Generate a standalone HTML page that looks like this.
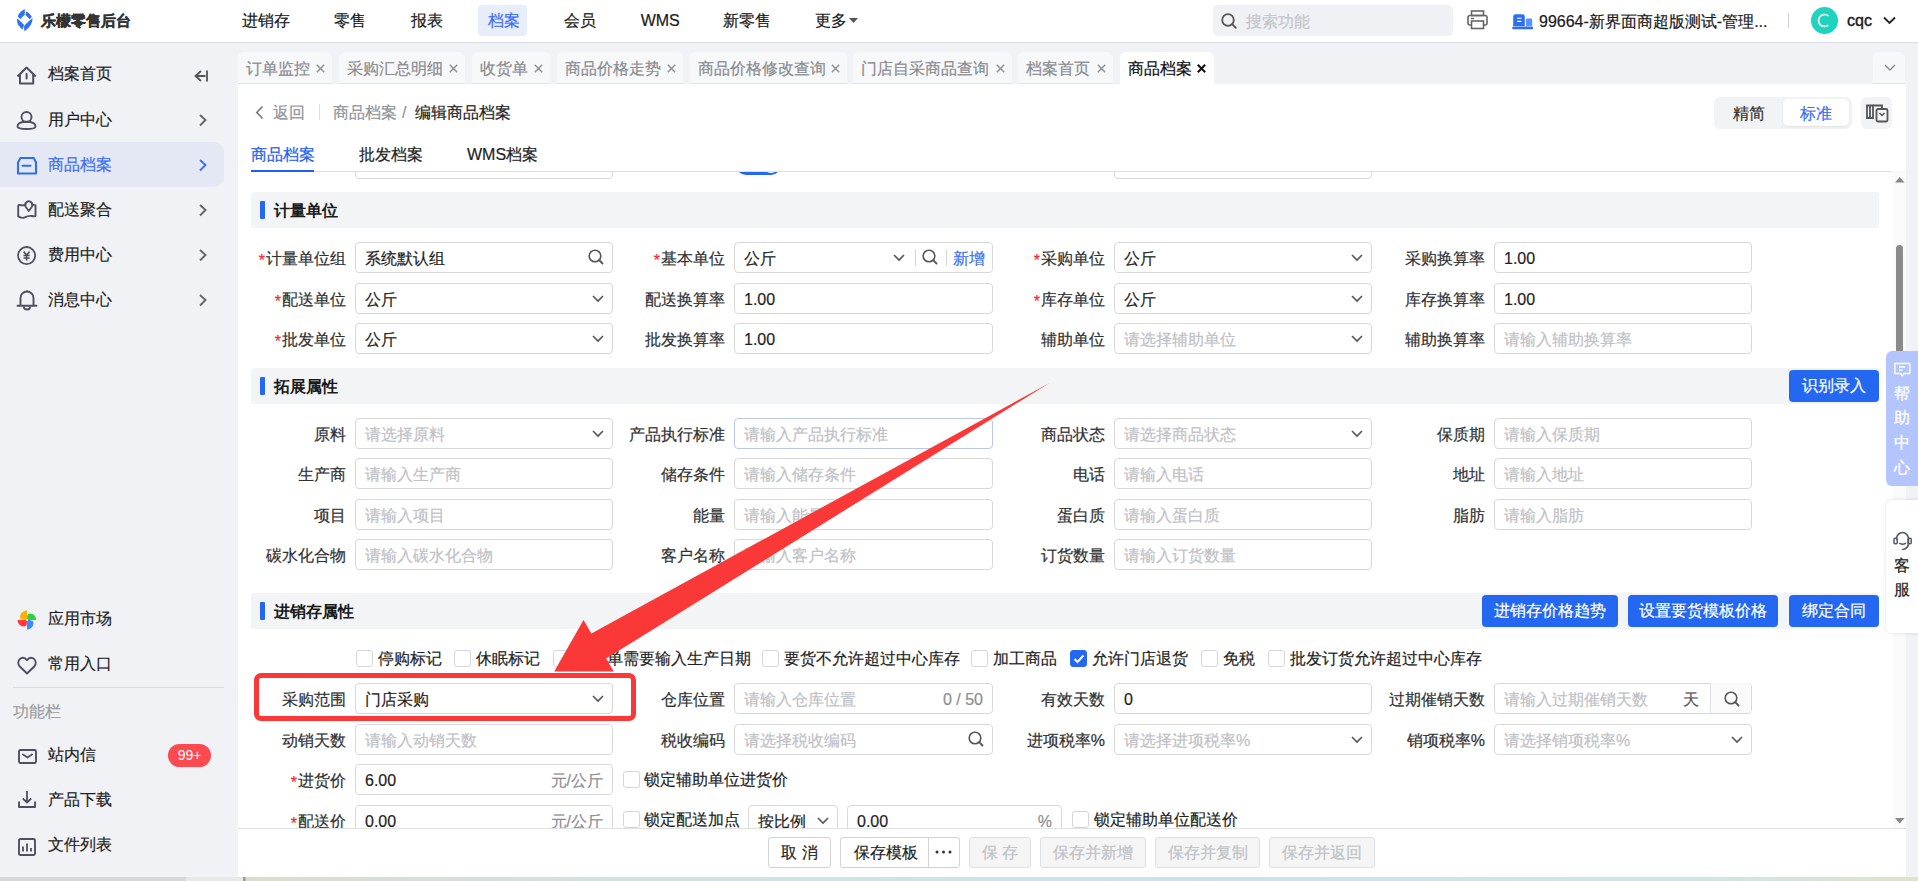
<!DOCTYPE html><html><head><meta charset="utf-8"><title>商品档案</title><style>
*{box-sizing:border-box;margin:0;padding:0}
html,body{-webkit-text-stroke:0.2px currentColor;width:1918px;height:881px;overflow:hidden;background:#f1f2f5;font-family:"Liberation Sans",sans-serif;font-size:16px;color:#1f1f1f}
.abs{position:absolute}
.t{position:absolute;white-space:nowrap;line-height:22px}
#hdr{position:absolute;left:0;top:0;width:1918px;height:43px;background:#fff;border-bottom:1px solid #dcdde2}
#side{position:absolute;left:0;top:43px;width:238px;height:834px;background:#f1f2f5}
#panel{position:absolute;left:238px;top:84px;width:1668px;height:793px;background:#fff}
.tab{position:absolute;top:52px;height:32px;background:#f7f8fa;border-radius:6px 6px 0 0;border-bottom:1px solid #e3e4e8;color:#8a8c91}
.tab span{position:absolute;top:6px;white-space:nowrap;line-height:22px}
.lbl{position:absolute;white-space:nowrap;text-align:right;line-height:22px;color:#303133}
.req{color:#f5222d;margin-right:1px;position:relative;top:2px}
.inp{position:absolute;height:31px;width:258px;border:1px solid #d9d9d9;border-radius:4px;background:#fff}
.inp .v{position:absolute;left:9px;top:5px;line-height:22px;white-space:nowrap;color:#1f1f1f}
.inp .p{position:absolute;left:9px;top:5px;line-height:22px;white-space:nowrap;color:#bfc1c6}
.sec{position:absolute;left:251px;width:1628px;height:36px;background:#f3f4f6;border-radius:3px}
.sec .bar{position:absolute;left:9px;top:9px;width:5px;height:18px;background:#2468f2;border-radius:1px}
.sec .ti{position:absolute;left:23px;top:8px;font-weight:bold;-webkit-text-stroke:0;line-height:22px;color:#1a1a1a}
.btn{position:absolute;height:32px;background:#2468f2;color:#fff;border-radius:4px;text-align:center;line-height:32px;white-space:nowrap}
.cb{position:absolute;width:17px;height:17px;border:1px solid #d4d6db;border-radius:3px;background:#fff}
.fbtn{position:absolute;top:837px;height:31px;border:1px solid #d0d2d6;border-radius:3px;background:#fff;text-align:center;line-height:29px;white-space:nowrap;color:#1f1f1f}
.fbtn.dis{background:#f5f5f5;border-color:#dedfe2;color:#c0c2c6}
svg{position:absolute;overflow:visible}
</style></head><body>
<div id="hdr">
<svg style="left:10px;top:5px" width="30" height="30" viewBox="0 0 30 30"><g fill="#2c72f3"><path d="M14.6 4.1 C11 6.5 8.5 8.5 7.8 11.6 L10.2 14.3 L14.6 9.8 C14.9 8 15 6 14.6 4.1 Z"/><path d="M16.2 6.3 C16 7.8 15.8 9 15.5 10 L19.7 14.3 L21.9 11.8 C20.5 9.5 18.5 7.8 16.2 6.3 Z"/><path d="M7 13.6 C6.5 18 9 22 12.6 24.5 C13.2 22.5 13.8 21 14 19.7 L9.6 15.6 Z"/><path d="M14.6 26.2 C18.5 23.5 22.5 19 22.6 13.3 L20.1 15 L14.3 20.4 C14 22.5 14 24.5 14.6 26.2 Z"/></g></svg>
<div class="t" style="left:41px;top:10px;font-weight:bold;color:#333;font-size:15px;-webkit-text-stroke:0.3px #333">乐檬零售后台</div>
<div class="abs" style="left:478px;top:5px;width:49px;height:31px;background:#e8edfc;border-radius:4px"></div>
<div class="t" style="left:241.7px;top:10px;color:#1a1a1a">进销存</div>
<div class="t" style="left:334px;top:10px;color:#1a1a1a">零售</div>
<div class="t" style="left:411px;top:10px;color:#1a1a1a">报表</div>
<div class="t" style="left:487.5px;top:10px;color:#3d6ff0">档案</div>
<div class="t" style="left:564.3px;top:10px;color:#1a1a1a">会员</div>
<div class="t" style="left:640.7px;top:10px;color:#1a1a1a">WMS</div>
<div class="t" style="left:722.6px;top:10px;color:#1a1a1a">新零售</div>
<div class="t" style="left:814.8px;top:10px;color:#1a1a1a">更多</div>
<svg style="left:849px;top:18px" width="9" height="5"><path d="M0 0 L9 0 L4.5 5Z" fill="#555"/></svg>
<div class="abs" style="left:1213px;top:5px;width:240px;height:31px;background:#f0f1f4;border-radius:5px"></div>
<svg style="left:1221px;top:13px" width="16" height="16"><circle cx="7" cy="7" r="5.8" fill="none" stroke="#555" stroke-width="1.8"/><path d="M11.2 11.2 L14.8 14.8" stroke="#555" stroke-width="1.8" stroke-linecap="round"/></svg>
<div class="t" style="left:1246px;top:11px;color:#c3c5ca">搜索功能</div>
<svg style="left:1467px;top:10px" width="21" height="20"><rect x="4.5" y="1" width="12" height="4.5" fill="none" stroke="#666" stroke-width="1.6"/><rect x="1" y="5.5" width="19" height="9.5" rx="2" fill="none" stroke="#666" stroke-width="1.6"/><rect x="4.5" y="11" width="12" height="7.5" fill="#fff" stroke="#666" stroke-width="1.6"/><path d="M4 8.5 H7" stroke="#666" stroke-width="1.4"/></svg>
<svg style="left:1512px;top:14px" width="22" height="17"><path d="M1.2 12 V2.5 A2.3 2.3 0 0 1 3.5 0.2 H10.5 A2.3 2.3 0 0 1 12.8 2.5 V12 Z" fill="#2c6ff5"/><path d="M14 12 V5.5 A1 1 0 0 1 15 4.5 H19 A1.2 1.2 0 0 1 20.2 5.7 V12 Z" fill="#5d93f8"/><path d="M5 4.3 H9.5 M5 7.4 H9.5" stroke="#fff" stroke-width="1.1"/><rect x="0.2" y="12.6" width="21" height="2.6" rx="1.3" fill="#2c6ff5"/></svg>
<div class="t" style="left:1539px;top:11px;color:#1a1a1a">99664-新界面商超版测试-管理...</div>
<div class="abs" style="left:1788px;top:13px;width:1px;height:15px;background:#cfd0d4"></div>
<div class="abs" style="left:1811px;top:7px;width:27px;height:27px;border-radius:50%;background:#1fd3bf"></div>
<svg style="left:1816px;top:12px" width="17" height="17"><path d="M12.5 4 A6 6 0 1 0 12.5 13" fill="none" stroke="#fff" stroke-width="1.6"/></svg>
<div class="t" style="left:1847px;top:10px;color:#1a1a1a;-webkit-text-stroke:0.4px #1a1a1a">cqc</div>
<svg style="left:1883px;top:16px" width="13" height="9"><path d="M1 1.5 L6.5 7 L12 1.5" fill="none" stroke="#222" stroke-width="1.8"/></svg>
</div>
<div id="side"></div>
<div class="abs" style="left:0;top:142px;width:224px;height:45px;background:#e4e8f5;border-radius:0 10px 10px 0"></div>
<div class="t" style="left:48px;top:63px;color:#1f1f1f">档案首页</div>
<div class="t" style="left:48px;top:108.5px;color:#1f1f1f">用户中心</div>
<svg style="left:199px;top:113.5px" width="9" height="13"><path d="M1 1 L6.5 6 L1 11.5" fill="none" stroke="#666" stroke-width="1.9"/></svg>
<div class="t" style="left:48px;top:153.5px;color:#3d6ff0">商品档案</div>
<svg style="left:199px;top:158.5px" width="9" height="13"><path d="M1 1 L6.5 6 L1 11.5" fill="none" stroke="#3d6ff0" stroke-width="1.9"/></svg>
<div class="t" style="left:48px;top:199px;color:#1f1f1f">配送聚合</div>
<svg style="left:199px;top:204px" width="9" height="13"><path d="M1 1 L6.5 6 L1 11.5" fill="none" stroke="#666" stroke-width="1.9"/></svg>
<div class="t" style="left:48px;top:244px;color:#1f1f1f">费用中心</div>
<svg style="left:199px;top:249px" width="9" height="13"><path d="M1 1 L6.5 6 L1 11.5" fill="none" stroke="#666" stroke-width="1.9"/></svg>
<div class="t" style="left:48px;top:289px;color:#1f1f1f">消息中心</div>
<svg style="left:199px;top:294px" width="9" height="13"><path d="M1 1 L6.5 6 L1 11.5" fill="none" stroke="#666" stroke-width="1.9"/></svg>
<div class="abs" style="left:0;top:600px;width:238px;height:0"></div>
<div class="t" style="left:48px;top:608px;color:#1f1f1f">应用市场</div>
<div class="t" style="left:48px;top:653px;color:#1f1f1f">常用入口</div>
<div class="t" style="left:48px;top:744px;color:#1f1f1f">站内信</div>
<div class="t" style="left:48px;top:789px;color:#1f1f1f">产品下载</div>
<div class="t" style="left:48px;top:834px;color:#1f1f1f">文件列表</div>
<svg style="left:16px;top:66px" width="22" height="20"><path d="M1.5 10.5 L10.6 1.5 L19.7 10.5" fill="none" stroke="#4e5060" stroke-width="2" stroke-linejoin="round"/><path d="M4 8 V17.5 H17.2 V8" fill="none" stroke="#4e5060" stroke-width="2" stroke-linejoin="round"/><path d="M10.6 8 V12.5" stroke="#4e5060" stroke-width="2" stroke-linecap="round"/></svg>
<svg style="left:16px;top:111px" width="21" height="20"><circle cx="10.5" cy="6" r="5" fill="none" stroke="#4e5060" stroke-width="1.9"/><path d="M1.5 15.5 C1.5 12.5 5 10.8 10.5 10.8 C16 10.8 19.5 12.5 19.5 15.5 C19.5 17.2 16 18 10.5 18 C5 18 1.5 17.2 1.5 15.5 Z" fill="none" stroke="#4e5060" stroke-width="1.9"/></svg>
<svg style="left:17px;top:157px" width="20" height="18"><path d="M3.5 1 H16.8 L19 5.5 V16.5 H1 V5.5 Z" fill="none" stroke="#2f6ef2" stroke-width="2.1" stroke-linejoin="round"/><path d="M5.5 8.8 H13.5" stroke="#2f6ef2" stroke-width="2.1" stroke-linecap="round"/></svg>
<svg style="left:17px;top:201px" width="21" height="19"><path d="M8.6 3.6 C7 4.4 5 4.6 3 4 C2 3.7 1.2 4.2 1.2 5.2 V15.3 C3 16.2 5 17.4 6.5 16.8 C9 15.8 11.5 14.3 15 15 C17 15.5 18.5 15.5 18.5 14.5 V4.5 C18.5 3.8 17.5 3.6 15 3.6" fill="none" stroke="#4e5060" stroke-width="1.9" stroke-linejoin="round" stroke-linecap="round"/><path d="M11.8 10 L8.8 6 A3.6 3.6 0 1 1 14.8 6 Z" fill="none" stroke="#4e5060" stroke-width="1.8" stroke-linejoin="round"/></svg>
<svg style="left:17px;top:246px" width="20" height="20"><circle cx="9.6" cy="9.6" r="8.6" fill="none" stroke="#4e5060" stroke-width="1.8"/><path d="M6.6 5.6 L9.6 9 L12.6 5.6 M6.5 9.5 H12.7 M6.5 12 H12.7 M9.6 9 V14.5" fill="none" stroke="#4e5060" stroke-width="1.6"/></svg>
<svg style="left:17px;top:290px" width="20" height="21"><path d="M3.5 15.5 V8 A6.5 6.5 0 0 1 16.5 8 V15.5" fill="none" stroke="#4e5060" stroke-width="1.9"/><path d="M0.5 15.8 H19.5" stroke="#4e5060" stroke-width="1.9" stroke-linecap="round"/><path d="M10 0.5 V1.8" stroke="#4e5060" stroke-width="1.8"/><path d="M6.8 16.5 A3.2 3 0 0 0 13.2 16.5" fill="none" stroke="#4e5060" stroke-width="1.8"/></svg>
<svg style="left:17px;top:609.5px" width="20" height="20"><path d="M10 10 C7 10 3 10 3 7 C3 3 7 0.5 10 0.5 Z" fill="#ffb000"/><path d="M10 10 C10 7 10 3.5 13 3.5 C17 3.5 19.2 7 19.2 10 Z" fill="#2fd141"/><path d="M10 10 C10 13 10 16.5 7 16.5 C3 16.5 0.5 13 0.5 10 Z" fill="#ff3a3a"/><path d="M10 10 C13 10 16.5 10 16.5 13 C16.5 17 13 19.5 10 19.5 Z" fill="#3a8dff"/><circle cx="10" cy="10" r="1" fill="#fff"/></svg>
<svg style="left:16.5px;top:656px" width="20" height="19"><path d="M10 17.5 L2.8 10.5 C0.5 8.2 0.8 4.2 3.5 2.5 C6 1 8.5 2 10 4.2 C11.5 2 14 1 16.5 2.5 C19.2 4.2 19.5 8.2 17.2 10.5 Z" fill="none" stroke="#4e5060" stroke-width="1.9" stroke-linejoin="round"/></svg>
<svg style="left:17.5px;top:749px" width="19" height="15"><rect x="1" y="1" width="17" height="13" rx="1.5" fill="none" stroke="#4e5060" stroke-width="1.9"/><path d="M5 5.5 L9.5 8.5 L14 5.5" fill="none" stroke="#4e5060" stroke-width="1.8" stroke-linecap="round"/></svg>
<svg style="left:17.5px;top:790px" width="18" height="19"><path d="M1 11.5 V17 H17 V11.5" fill="none" stroke="#4e5060" stroke-width="1.9" stroke-linejoin="round"/><path d="M9 1 V12.5 M4.8 8.5 L9 12.5 L13.2 8.5" fill="none" stroke="#4e5060" stroke-width="1.8"/></svg>
<svg style="left:17.5px;top:837.5px" width="18" height="18"><rect x="1" y="1" width="16" height="16" rx="1.5" fill="none" stroke="#4e5060" stroke-width="1.9"/><path d="M5 8.5 V13.5 M9 5.5 V13.5 M13 10 V13.5" stroke="#4e5060" stroke-width="1.8"/></svg>
<svg style="left:194px;top:69.5px" width="15" height="13"><path d="M7 1 L1.5 6 L7 11 M1.5 6 H11.5 M13 0.5 V11.5" fill="none" stroke="#555" stroke-width="1.8"/></svg>
<div class="abs" style="left:13px;top:687px;width:211px;height:1px;background:#d9dadf"></div>
<div class="t" style="left:13px;top:701px;color:#9a9ca1">功能栏</div>
<div class="abs" style="left:168px;top:744px;width:43px;height:23px;background:#fc4a50;border-radius:12px;color:#fff;font-size:14px;-webkit-text-stroke:0;line-height:23px;text-align:center">99+</div>
<div class="tab" style="left:238px;width:94px"><span style="left:8px">订单监控</span><svg style="right:7px;top:12px" width="9" height="9"><path d="M0.8 0.8 L8.2 8.2 M8.2 0.8 L0.8 8.2" stroke="#8f9196" stroke-width="1.5"/></svg></div>
<div class="tab" style="left:339px;width:126px"><span style="left:8px">采购汇总明细</span><svg style="right:7px;top:12px" width="9" height="9"><path d="M0.8 0.8 L8.2 8.2 M8.2 0.8 L0.8 8.2" stroke="#8f9196" stroke-width="1.5"/></svg></div>
<div class="tab" style="left:472px;width:78px"><span style="left:8px">收货单</span><svg style="right:7px;top:12px" width="9" height="9"><path d="M0.8 0.8 L8.2 8.2 M8.2 0.8 L0.8 8.2" stroke="#8f9196" stroke-width="1.5"/></svg></div>
<div class="tab" style="left:557px;width:126px"><span style="left:8px">商品价格走势</span><svg style="right:7px;top:12px" width="9" height="9"><path d="M0.8 0.8 L8.2 8.2 M8.2 0.8 L0.8 8.2" stroke="#8f9196" stroke-width="1.5"/></svg></div>
<div class="tab" style="left:690px;width:157px"><span style="left:8px">商品价格修改查询</span><svg style="right:7px;top:12px" width="9" height="9"><path d="M0.8 0.8 L8.2 8.2 M8.2 0.8 L0.8 8.2" stroke="#8f9196" stroke-width="1.5"/></svg></div>
<div class="tab" style="left:853px;width:159px"><span style="left:8px">门店自采商品查询</span><svg style="right:7px;top:12px" width="9" height="9"><path d="M0.8 0.8 L8.2 8.2 M8.2 0.8 L0.8 8.2" stroke="#8f9196" stroke-width="1.5"/></svg></div>
<div class="tab" style="left:1018px;width:95px"><span style="left:8px">档案首页</span><svg style="right:7px;top:12px" width="9" height="9"><path d="M0.8 0.8 L8.2 8.2 M8.2 0.8 L0.8 8.2" stroke="#8f9196" stroke-width="1.5"/></svg></div>
<div class="tab" style="left:1120px;width:94px;background:#fff;border-bottom:none;color:#111"><span style="left:8px">商品档案</span><svg style="right:8px;top:12px" width="9" height="9"><path d="M0.8 0.8 L8.2 8.2 M8.2 0.8 L0.8 8.2" stroke="#111" stroke-width="2"/></svg></div>
<div class="tab" style="left:1873px;width:32px"></div>
<svg style="left:1884px;top:64px" width="12" height="7"><path d="M1 1 L6 6 L11 1" fill="none" stroke="#888" stroke-width="1.4"/></svg>
<div id="panel"></div>
<svg style="left:255px;top:105px" width="9" height="15"><path d="M7.5 1.5 L1.8 7.5 L7.5 13.5" fill="none" stroke="#777" stroke-width="1.6"/></svg>
<div class="t" style="left:273px;top:102px;color:#909399">返回</div>
<div class="abs" style="left:319px;top:104px;width:1px;height:16px;background:#dcdfe6"></div>
<div class="t" style="left:333px;top:102px;color:#909399">商品档案</div>
<div class="t" style="left:402px;top:102px;color:#909399">/</div>
<div class="t" style="left:415px;top:102px;color:#1f1f1f">编辑商品档案</div>
<div class="abs" style="left:1714px;top:97px;width:138px;height:32px;background:#f2f3f5;border-radius:6px"></div>
<div class="abs" style="left:1783px;top:99px;width:66px;height:27px;background:#fff;border-radius:5px;box-shadow:0 1px 2px rgba(0,0,0,.08)"></div>
<div class="t" style="left:1733px;top:103px;color:#303133">精简</div>
<div class="t" style="left:1800px;top:103px;color:#3d6ff0">标准</div>
<div class="abs" style="left:1861px;top:97px;width:31px;height:32px;background:#f2f3f5;border-radius:6px"></div>
<svg style="left:1866px;top:104px" width="24" height="19"><path d="M1 1.5 H7 V14 H1 Z M4 1.5 V14" fill="none" stroke="#555" stroke-width="1.8"/><rect x="10.5" y="5" width="11" height="12.5" rx="1.5" fill="#f2f3f5" stroke="#555" stroke-width="1.8"/><path d="M7 1.5 H16 V5" fill="none" stroke="#555" stroke-width="1.8"/><path d="M13.5 9 L16 11.5 L18.5 9" fill="none" stroke="#555" stroke-width="1.5"/></svg>
<div class="t" style="left:251px;top:144px;color:#1d5ef5">商品档案</div>
<div class="t" style="left:359px;top:144px;color:#1f1f1f">批发档案</div>
<div class="t" style="left:467px;top:144px;color:#1f1f1f">WMS档案</div>
<div class="abs" style="left:238px;top:171px;width:1668px;height:657px;overflow:hidden">
<div class="inp" style="left:117px;top:-23px"></div>
<div class="inp" style="left:876px;top:-23px"></div>
<div class="abs" style="left:498px;top:-16px;width:45px;height:20px;border-radius:10px;background:#2468f2"></div>
<div class="abs" style="left:525px;top:-14px;width:16px;height:16px;border-radius:8px;background:#fff"></div>
<div class="sec" style="left:13px;top:21px"><div class="bar"></div><div class="ti">计量单位</div></div>
<div class="lbl" style="right:1560px;top:77px"><span class="req">*</span>计量单位组</div>
<div class="inp" style="left:117px;top:71px;width:258px;"><span class="v">系统默认组</span><svg style="left:232px;top:6px" width="16" height="16"><circle cx="7" cy="7" r="5.8" fill="none" stroke="#555" stroke-width="1.6"/><path d="M11.2 11.2 L14.5 14.5" stroke="#555" stroke-width="1.8" stroke-linecap="round"/></svg></div>
<div class="lbl" style="right:1181px;top:77px"><span class="req">*</span>基本单位</div>
<div class="inp" style="left:496px;top:71px;width:259px"><span class="v">公斤</span><svg style="left:158px;top:11px" width="12" height="8"><path d="M1 1 L6 6 L11 1" fill="none" stroke="#555" stroke-width="1.6"/></svg><div class="abs" style="left:180px;top:6px;width:1px;height:17px;background:#d8d8d8"></div><svg style="left:187px;top:6px" width="16" height="16"><circle cx="7" cy="7" r="5.8" fill="none" stroke="#555" stroke-width="1.6"/><path d="M11.2 11.2 L14.5 14.5" stroke="#555" stroke-width="1.8" stroke-linecap="round"/></svg><div class="abs" style="left:211px;top:6px;width:1px;height:17px;background:#d8d8d8"></div><span class="v" style="left:218px;color:#3d6ff0">新增</span></div>
<div class="lbl" style="right:801px;top:77px"><span class="req">*</span>采购单位</div>
<div class="inp" style="left:876px;top:71px;width:258px;"><span class="v">公斤</span><svg style="left:236px;top:11px" width="12" height="8"><path d="M1 1 L6 6 L11 1" fill="none" stroke="#555" stroke-width="1.6"/></svg></div>
<div class="lbl" style="right:421px;top:77px">采购换算率</div>
<div class="inp" style="left:1256px;top:71px;width:258px;"><span class="v">1.00</span></div>
<div class="lbl" style="right:1560px;top:118px"><span class="req">*</span>配送单位</div>
<div class="inp" style="left:117px;top:112px;width:258px;"><span class="v">公斤</span><svg style="left:236px;top:11px" width="12" height="8"><path d="M1 1 L6 6 L11 1" fill="none" stroke="#555" stroke-width="1.6"/></svg></div>
<div class="lbl" style="right:1181px;top:118px">配送换算率</div>
<div class="inp" style="left:496px;top:112px;width:259px;"><span class="v">1.00</span></div>
<div class="lbl" style="right:801px;top:118px"><span class="req">*</span>库存单位</div>
<div class="inp" style="left:876px;top:112px;width:258px;"><span class="v">公斤</span><svg style="left:236px;top:11px" width="12" height="8"><path d="M1 1 L6 6 L11 1" fill="none" stroke="#555" stroke-width="1.6"/></svg></div>
<div class="lbl" style="right:421px;top:118px">库存换算率</div>
<div class="inp" style="left:1256px;top:112px;width:258px;"><span class="v">1.00</span></div>
<div class="lbl" style="right:1560px;top:158px"><span class="req">*</span>批发单位</div>
<div class="inp" style="left:117px;top:152px;width:258px;"><span class="v">公斤</span><svg style="left:236px;top:11px" width="12" height="8"><path d="M1 1 L6 6 L11 1" fill="none" stroke="#555" stroke-width="1.6"/></svg></div>
<div class="lbl" style="right:1181px;top:158px">批发换算率</div>
<div class="inp" style="left:496px;top:152px;width:259px;"><span class="v">1.00</span></div>
<div class="lbl" style="right:801px;top:158px">辅助单位</div>
<div class="inp" style="left:876px;top:152px;width:258px;"><span class="p">请选择辅助单位</span><svg style="left:236px;top:11px" width="12" height="8"><path d="M1 1 L6 6 L11 1" fill="none" stroke="#555" stroke-width="1.6"/></svg></div>
<div class="lbl" style="right:421px;top:158px">辅助换算率</div>
<div class="inp" style="left:1256px;top:152px;width:258px;"><span class="p">请输入辅助换算率</span></div>
<div class="sec" style="left:13px;top:197px"><div class="bar"></div><div class="ti">拓展属性</div></div>
<div class="btn" style="left:1551px;top:199px;width:90px">识别录入</div>
<div class="lbl" style="right:1560px;top:253px">原料</div>
<div class="inp" style="left:117px;top:247px;width:258px;"><span class="p">请选择原料</span><svg style="left:236px;top:11px" width="12" height="8"><path d="M1 1 L6 6 L11 1" fill="none" stroke="#555" stroke-width="1.6"/></svg></div>
<div class="lbl" style="right:1181px;top:253px">产品执行标准</div>
<div class="inp" style="left:496px;top:247px;width:259px;border-color:#b9c8ec"><span class="p">请输入产品执行标准</span></div>
<div class="lbl" style="right:801px;top:253px">商品状态</div>
<div class="inp" style="left:876px;top:247px;width:258px;"><span class="p">请选择商品状态</span><svg style="left:236px;top:11px" width="12" height="8"><path d="M1 1 L6 6 L11 1" fill="none" stroke="#555" stroke-width="1.6"/></svg></div>
<div class="lbl" style="right:421px;top:253px">保质期</div>
<div class="inp" style="left:1256px;top:247px;width:258px;"><span class="p">请输入保质期</span></div>
<div class="lbl" style="right:1560px;top:293px">生产商</div>
<div class="inp" style="left:117px;top:287px;width:258px;"><span class="p">请输入生产商</span></div>
<div class="lbl" style="right:1181px;top:293px">储存条件</div>
<div class="inp" style="left:496px;top:287px;width:259px;"><span class="p">请输入储存条件</span></div>
<div class="lbl" style="right:801px;top:293px">电话</div>
<div class="inp" style="left:876px;top:287px;width:258px;"><span class="p">请输入电话</span></div>
<div class="lbl" style="right:421px;top:293px">地址</div>
<div class="inp" style="left:1256px;top:287px;width:258px;"><span class="p">请输入地址</span></div>
<div class="lbl" style="right:1560px;top:334px">项目</div>
<div class="inp" style="left:117px;top:328px;width:258px;"><span class="p">请输入项目</span></div>
<div class="lbl" style="right:1181px;top:334px">能量</div>
<div class="inp" style="left:496px;top:328px;width:259px;"><span class="p">请输入能量</span></div>
<div class="lbl" style="right:801px;top:334px">蛋白质</div>
<div class="inp" style="left:876px;top:328px;width:258px;"><span class="p">请输入蛋白质</span></div>
<div class="lbl" style="right:421px;top:334px">脂肪</div>
<div class="inp" style="left:1256px;top:328px;width:258px;"><span class="p">请输入脂肪</span></div>
<div class="lbl" style="right:1560px;top:374px">碳水化合物</div>
<div class="inp" style="left:117px;top:368px;width:258px;"><span class="p">请输入碳水化合物</span></div>
<div class="lbl" style="right:1181px;top:374px">客户名称</div>
<div class="inp" style="left:496px;top:368px;width:259px;"><span class="p">请输入客户名称</span></div>
<div class="lbl" style="right:801px;top:374px">订货数量</div>
<div class="inp" style="left:876px;top:368px;width:258px;"><span class="p">请输入订货数量</span></div>
<div class="sec" style="left:13px;top:422px"><div class="bar"></div><div class="ti">进销存属性</div></div>
<div class="btn" style="left:1244px;top:424px;width:136px">进销存价格趋势</div>
<div class="btn" style="left:1390px;top:424px;width:150px">设置要货模板价格</div>
<div class="btn" style="left:1551px;top:424px;width:90px">绑定合同</div>
<div class="cb" style="left:117.5px;top:479px"></div>
<div class="t" style="left:139.5px;top:477px;color:#1f1f1f">停购标记</div>
<div class="cb" style="left:216px;top:479px"></div>
<div class="t" style="left:238px;top:477px;color:#1f1f1f">休眠标记</div>
<div class="cb" style="left:315px;top:479px"></div>
<div class="t" style="left:337px;top:477px;color:#1f1f1f">收货单需要输入生产日期</div>
<div class="cb" style="left:524px;top:479px"></div>
<div class="t" style="left:546px;top:477px;color:#1f1f1f">要货不允许超过中心库存</div>
<div class="cb" style="left:733px;top:479px"></div>
<div class="t" style="left:755px;top:477px;color:#1f1f1f">加工商品</div>
<div class="cb" style="left:832px;top:479px;background:#2468f2;border-color:#2468f2"></div>
<svg style="left:835px;top:483px" width="12" height="10"><path d="M1.5 5 L4.5 8 L10.5 1.5" fill="none" stroke="#fff" stroke-width="2"/></svg>
<div class="t" style="left:854px;top:477px;color:#1f1f1f">允许门店退货</div>
<div class="cb" style="left:963px;top:479px"></div>
<div class="t" style="left:985px;top:477px;color:#1f1f1f">免税</div>
<div class="cb" style="left:1030px;top:479px"></div>
<div class="t" style="left:1052px;top:477px;color:#1f1f1f">批发订货允许超过中心库存</div>
<div class="lbl" style="right:1560px;top:518px">采购范围</div>
<div class="inp" style="left:117px;top:512px;width:258px;"><span class="v">门店采购</span><svg style="left:236px;top:11px" width="12" height="8"><path d="M1 1 L6 6 L11 1" fill="none" stroke="#555" stroke-width="1.6"/></svg></div>
<div class="lbl" style="right:1181px;top:518px">仓库位置</div>
<div class="inp" style="left:496px;top:512px;width:259px;"><span class="p">请输入仓库位置</span><span class="v" style="left:auto;right:9px;color:#8c8e93">0 / 50</span></div>
<div class="lbl" style="right:801px;top:518px">有效天数</div>
<div class="inp" style="left:876px;top:512px;width:258px;"><span class="v">0</span></div>
<div class="lbl" style="right:421px;top:518px">过期催销天数</div>
<div class="inp" style="left:1256px;top:512px"><span class="p">请输入过期催销天数</span><span class="v" style="left:188px;color:#555">天</span><div class="abs" style="left:215px;top:-1px;width:41px;height:30px;background:#fafafa;border-left:1px solid #dcdfe6;border-radius:0 4px 4px 0"></div><svg style="left:229px;top:7px" width="16" height="16"><circle cx="7" cy="7" r="5.8" fill="none" stroke="#555" stroke-width="1.6"/><path d="M11.2 11.2 L14.5 14.5" stroke="#555" stroke-width="1.8" stroke-linecap="round"/></svg></div>
<div class="lbl" style="right:1560px;top:559px">动销天数</div>
<div class="inp" style="left:117px;top:553px;width:258px;"><span class="p">请输入动销天数</span></div>
<div class="lbl" style="right:1181px;top:559px">税收编码</div>
<div class="inp" style="left:496px;top:553px;width:259px;"><span class="p">请选择税收编码</span><svg style="left:233px;top:6px" width="16" height="16"><circle cx="7" cy="7" r="5.8" fill="none" stroke="#555" stroke-width="1.6"/><path d="M11.2 11.2 L14.5 14.5" stroke="#555" stroke-width="1.8" stroke-linecap="round"/></svg></div>
<div class="lbl" style="right:801px;top:559px">进项税率%</div>
<div class="inp" style="left:876px;top:553px;width:258px;"><span class="p">请选择进项税率%</span><svg style="left:236px;top:11px" width="12" height="8"><path d="M1 1 L6 6 L11 1" fill="none" stroke="#555" stroke-width="1.6"/></svg></div>
<div class="lbl" style="right:421px;top:559px">销项税率%</div>
<div class="inp" style="left:1256px;top:553px;width:258px;"><span class="p">请选择销项税率%</span><svg style="left:236px;top:11px" width="12" height="8"><path d="M1 1 L6 6 L11 1" fill="none" stroke="#555" stroke-width="1.6"/></svg></div>
<div class="lbl" style="right:1560px;top:599px"><span class="req">*</span>进货价</div>
<div class="inp" style="left:117px;top:593px;width:258px;"><span class="v">6.00</span><span class="v" style="left:auto;right:9px;color:#8c8e93">元/公斤</span></div>
<div class="cb" style="left:384.5px;top:600px"></div>
<div class="t" style="left:406px;top:598px">锁定辅助单位进货价</div>
<div class="lbl" style="right:1560px;top:640px"><span class="req">*</span>配送价</div>
<div class="inp" style="left:117px;top:634px;width:258px;"><span class="v">0.00</span><span class="v" style="left:auto;right:9px;color:#8c8e93">元/公斤</span></div>
<div class="cb" style="left:384.5px;top:640px"></div>
<div class="t" style="left:406px;top:638px">锁定配送加点</div>
<div class="inp" style="left:510px;top:634px;width:90px"><span class="v">按比例</span><svg style="left:68px;top:11px" width="12" height="8"><path d="M1 1 L6 6 L11 1" fill="none" stroke="#555" stroke-width="1.6"/></svg></div>
<div class="inp" style="left:609px;top:634px;width:215px;"><span class="v">0.00</span><span class="v" style="left:auto;right:9px;color:#8c8e93">%</span></div>
<div class="cb" style="left:834px;top:640px"></div>
<div class="t" style="left:856px;top:638px">锁定辅助单位配送价</div>
<div class="abs" style="left:1655px;top:0;width:13px;height:657px;background:#fafafa"></div>
<svg style="left:1657px;top:6px" width="10" height="6"><path d="M0 5.5 L4.75 0 L9.5 5.5Z" fill="#888"/></svg>
<svg style="left:1657px;top:647px" width="10" height="6"><path d="M0 0 L4.75 5.5 L9.5 0Z" fill="#888"/></svg>
<div class="abs" style="left:1658px;top:74px;width:7px;height:115px;background:#8a8a8a;border-radius:4px"></div>
</div>
<div class="abs" style="left:251px;top:171px;width:1641px;height:1px;background:#dcdfe6"></div>
<div class="abs" style="left:251px;top:170px;width:63px;height:2px;background:#1d5ef5"></div>
<div class="abs" style="left:238px;top:828px;width:1668px;height:1px;background:#e0e1e5"></div>
<div class="fbtn" style="left:768px;width:63px">取 消</div>
<div class="fbtn" style="left:840px;width:120px;text-align:left;padding-left:13px">保存模板</div>
<div class="abs" style="left:928px;top:838px;width:1px;height:29px;background:#d0d2d6"></div>
<svg style="left:935px;top:850px" width="18" height="4"><circle cx="2" cy="2" r="1.5" fill="#333"/><circle cx="8.5" cy="2" r="1.5" fill="#333"/><circle cx="15" cy="2" r="1.5" fill="#333"/></svg>
<div class="fbtn dis" style="left:969px;width:62px">保 存</div>
<div class="fbtn dis" style="left:1040px;width:106px">保存并新增</div>
<div class="fbtn dis" style="left:1155px;width:105px">保存并复制</div>
<div class="fbtn dis" style="left:1269px;width:106px">保存并返回</div>
<div class="abs" style="left:0;top:877px;width:1918px;height:4px;background:linear-gradient(90deg,#d6d8d9 0,#d6d8d9 186px,#e8e8e8 186px,#e8e8e8 243px,#9a9a9a 243px,#9a9a9a 245px,#dcdccb 246px,#d2e2e2 600px,#cbe3e8 1200px,#cfe6e6 1700px,#dfe3c8 1918px)"></div>
<div class="abs" style="left:1886px;top:351px;width:32px;height:135px;background:#b3c5fc;border-radius:6px 0 0 6px"></div>
<svg style="left:1893px;top:362px" width="19" height="16"><path d="M1.8 1.5 H16.8 V11.5 H11 L9.3 13.8 L7.6 11.5 H1.8 Z" fill="none" stroke="#fff" stroke-width="1.4" stroke-linejoin="round"/><path d="M6 5 H12 M6 8 H9.5" stroke="#fff" stroke-width="1.4"/></svg>
<div class="t" style="left:1894px;top:382.5px;color:#fff;font-size:16px;-webkit-text-stroke:0.3px #fff">帮</div>
<div class="t" style="left:1894px;top:407.3px;color:#fff;font-size:16px;-webkit-text-stroke:0.3px #fff">助</div>
<div class="t" style="left:1894px;top:432.1px;color:#fff;font-size:16px;-webkit-text-stroke:0.3px #fff">中</div>
<div class="t" style="left:1894px;top:456.9px;color:#fff;font-size:16px;-webkit-text-stroke:0.3px #fff">心</div>
<div class="abs" style="left:1886px;top:500px;width:40px;height:133px;background:#fff;border-radius:6px 0 0 6px;box-shadow:0 0 4px rgba(0,0,0,.12)"></div>
<svg style="left:1892px;top:530px" width="21" height="21"><path d="M4.5 9 A6 6.5 0 0 1 16.5 9 V12.5 C16.5 16.5 14 19 10.8 19.5" fill="none" stroke="#555a66" stroke-width="1.6" stroke-linecap="round"/><rect x="2" y="8.3" width="3.2" height="5.5" rx="1" fill="none" stroke="#555a66" stroke-width="1.5"/><rect x="16" y="8.3" width="3.2" height="5.5" rx="1" fill="none" stroke="#555a66" stroke-width="1.5"/><path d="M7.8 13.3 Q10.6 15 13.5 13.3" fill="none" stroke="#555a66" stroke-width="1.5" stroke-linecap="round"/></svg>
<div class="t" style="left:1894px;top:555px;color:#1f1f1f">客</div>
<div class="t" style="left:1894px;top:579px;color:#1f1f1f">服</div>
<div class="abs" style="left:254px;top:673px;width:382px;height:48px;border:5px solid #fa3838;border-radius:7px"></div>
<svg style="left:0;top:0" width="1918" height="881"><path d="M1050 382.7 L591.4 633.5 L583.5 620 L554.2 671.5 L613.8 671.5 L606.2 658.5 Z" fill="#fa3838"/></svg>
</body></html>
